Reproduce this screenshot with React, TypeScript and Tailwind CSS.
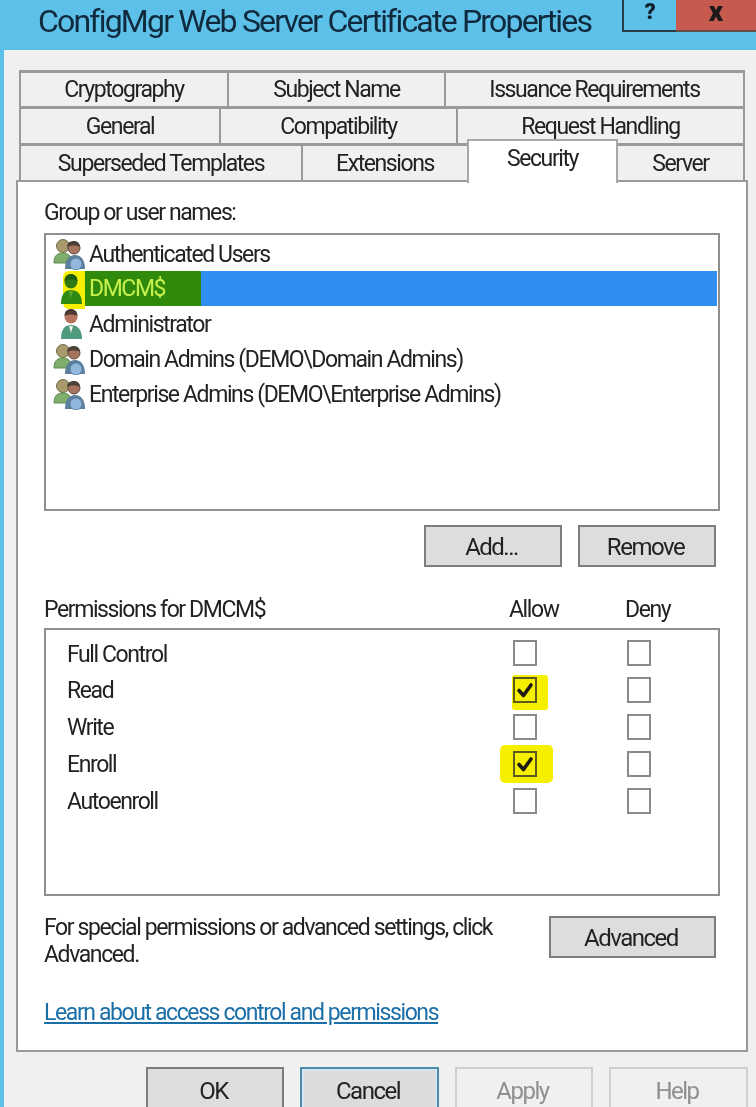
import React from "react";

const font = "font-['Roboto',sans-serif]";

function GroupIcon() {
  return (
    <svg width="33" height="32" viewBox="0 0 33 32" className="shrink-0">
      <circle cx="10" cy="8" r="6.5" fill="#a89a6c" stroke="#6f7048" strokeWidth="1" />
      <path d="M1 25c0-8 4-10 9-10s9 3 9 10z" fill="#7fae6c" stroke="#5f8a52" strokeWidth="1" />
      <circle cx="21" cy="10" r="6" fill="#a8735c" stroke="#5c4a40" strokeWidth="1" />
      <path d="M21 3c-4 0-7 2-7 6 3-2 10-2 13 0 0-4-3-6-6-6z" fill="#4c4038" />
      <path d="M12 31c0-9 4-14 10-14s10 5 10 14z" fill="#5b7f9c" />
      <circle cx="23" cy="26" r="6" fill="#8fb8dc" stroke="#5f85a5" strokeWidth="1" />
    </svg>
  );
}

function UserIcon({ green }: { green?: boolean }) {
  return (
    <svg width="24" height="32" viewBox="0 0 24 32" className="shrink-0">
      <circle cx="11" cy="9" r="6.5" fill={green ? "#2f7a12" : "#b5745e"} />
      <path d="M4.500 8c0-5 3-7 6.500-7s6.500 2 6.500 7c-4-2-9-2-13 0z" fill={green ? "#1e5c10" : "#4a3a30"} />
      <path d="M1 31c0-10 4-14 10-14s11 4 11 14z" fill={green ? "#2f8a14" : "#4d9a7c"} />
      <path d="M9 18h4l-2 7z" fill={green ? "#5ca82c" : "#e8f0e8"} />
    </svg>
  );
}

function CheckBox({ checked, dark }: { checked?: boolean; dark?: boolean }) {
  return (
    <div className={`w-[24px] h-[26px] border-[2px] flex items-center justify-center ${checked ? "border-[#5d5a20]" : "border-[#8a8a8a]"} ${dark ? "" : "bg-white"}`}>
      {checked && (
        <svg width="18" height="18" viewBox="0 0 18 18">
          <path d="M3 9.500l4.500 5L15 4" fill="none" stroke="#1f1a10" strokeWidth="3.6" strokeLinecap="round" strokeLinejoin="round" />
        </svg>
      )}
    </div>
  );
}

function Btn({ label, w, disabled, accent, cls }: { label: string; w: string; disabled?: boolean; accent?: boolean; cls?: string }) {
  return (
    <div
      className={`${w} ${cls ?? "h-[42px]"} flex items-center justify-center pt-[1px] pr-[3px] border-[2px] text-[24px] tracking-[-1.5px] ${
        disabled
          ? "border-[#cfcfcf] bg-[#f0f0f0] text-[#8f8f8f]"
          : accent
          ? "border-[#4d8ba6] bg-[#dcdcdc] text-[#222] shadow-[inset_0_0_0_2px_#d4e6f2]"
          : "border-[#7d7d7d] bg-[#dddddd] text-[#222]"
      }`}
    >
      {label}
    </div>
  );
}

const tabBase = "flex items-center justify-center pt-[2px] bg-[#f0f0f0] border-t-[3px] border-l-[2px] border-[#9a9a9a] text-[23px] tracking-[-1.4px] text-[#222]";

function App() {
  return (
    <div className={`w-[756px] h-[1107px] overflow-hidden bg-[#5cc0e8] flex flex-col blur-[0.4px] ${font}`}>
      <div className="h-[50px] flex shrink-0">
        <div className="w-[622px] pl-[38px] pt-[1px] text-[32px] leading-[40px] whitespace-nowrap tracking-[-1.8px] text-[#10293d]">
          ConfigMgr Web Server Certificate Properties
        </div>
        <div className="w-[54px] h-[32px] border-l-[2px] border-b-[2px] border-[#2c3a44] pb-[6px] flex items-center justify-center text-[22px] leading-[22px] font-black text-[#10202c]">?</div>
        <div className="w-[80px] h-[32px] bg-[#c75a4e] border-b-[2px] border-[#6a4a44] pb-[6px] flex items-center justify-center text-[28px] leading-[22px] font-black text-[#1a1a1a]">x</div>
      </div>

      <div className="flex-1 ml-[4px] bg-[#f0f0f0] flex flex-col pt-[20px] min-h-0">
        <div className="ml-[15px] w-[726px] flex flex-col border-r-[2px] border-[#9a9a9a]">
          <div className="flex h-[36px]">
            <div className={`${tabBase} w-[208px]`}>Cryptography</div>
            <div className={`${tabBase} w-[217px]`}>Subject Name</div>
            <div className={`${tabBase} flex-1`}>Issuance Requirements</div>
          </div>
          <div className="flex h-[37px]">
            <div className={`${tabBase} w-[200px]`}>General</div>
            <div className={`${tabBase} w-[237px]`}>Compatibility</div>
            <div className={`${tabBase} flex-1`}>Request Handling</div>
          </div>
          <div className="flex h-[37px]">
            <div className={`${tabBase} w-[282px]`}>Superseded Templates</div>
            <div className={`${tabBase} w-[166px]`}>Extensions</div>
            <div className="relative z-10 w-[151px] h-[44px] -mt-[4px] pb-[6px] flex items-center justify-center bg-white border-t-[2px] border-l-[2px] border-r-[2px] border-[#a8a8a8] text-[23px] tracking-[-1.4px] text-[#222]">Security</div>
            <div className={`${tabBase} flex-1 !border-l-0`}>Server</div>
          </div>
        </div>

        <div className="ml-[12px] w-[732px] h-[872px] shrink-0 bg-white border-[2px] border-[#9a9a9a] px-[26px] flex flex-col text-[#222] text-[23px] tracking-[-1.4px]">
          <div className="h-[51px] flex items-end leading-[32px] pb-[3px] -mt-[1px]">Group or user names:</div>
          <div className="h-[278px] mt-[1px] border-[2px] border-[#8f8f8f] pt-[1px] pl-[8px] pr-[1px] flex flex-col shrink-0">
            <div className="h-[35px] flex items-center"><div className="w-[36px] -ml-[1px]"><GroupIcon /></div><span className="pt-[3px]">Authenticated Users</span></div>
            <div className="h-[35px] flex items-start">
              <div className="w-[22px] h-[38px] ml-[9px] pb-[3px] flex items-center bg-[#f6f000] rounded-l-[6px]"><div className="-ml-[3px]"><UserIcon green /></div></div>
              <div className="flex-1 h-[35px] flex bg-[#2f8ff0]">
                <div className="w-[116px] bg-[#2f8a0c] text-[#c8f04c] flex items-center pl-[4px] pt-[2px]">DMCM$</div>
              </div>
            </div>
            <div className="h-[35px] flex items-center"><div className="w-[35px] pl-[6px]"><UserIcon /></div><span className="pt-[3px]">Administrator</span></div>
            <div className="h-[35px] flex items-center"><div className="w-[36px] -ml-[1px]"><GroupIcon /></div><span className="pt-[3px]">Domain Admins (DEMO\Domain Admins)</span></div>
            <div className="h-[35px] flex items-center"><div className="w-[36px] -ml-[1px]"><GroupIcon /></div><span className="pt-[3px]">Enterprise Admins (DEMO\Enterprise Admins)</span></div>
          </div>

          <div className="flex justify-end gap-[16px] mt-[14px] pr-[4px]">
            <Btn label="Add..." w="w-[138px]" />
            <Btn label="Remove" w="w-[138px]" />
          </div>

          <div className="flex h-[32px] mt-[26px] pt-[2px] items-center leading-[32px]">
            <div className="w-[465px]">Permissions for DMCM$</div>
            <div className="w-[116px]">Allow</div>
            <div>Deny</div>
          </div>

          <div className="h-[268px] mt-[3px] border-[2px] border-[#8f8f8f] pt-[5px] pl-[21px] flex flex-col shrink-0">
            {[
              ["Full Control", false],
              ["Read", true],
              ["Write", false],
              ["Enroll", true],
              ["Autoenroll", false],
            ].map(([label, c], i) => (
              <div key={i} className="h-[36.8px] flex items-center shrink-0">
                <div className="w-[446px] pt-[3px]">{label as string}</div>
                <div className="relative w-[114px]">
                  {i === 1 && <div className="absolute left-[-1px] top-[-2px] w-[36px] h-[35px] bg-[#f6f000] rounded-[3px]" />}
                  {i === 3 && <div className="absolute left-[-13px] top-[-6px] w-[53px] h-[38px] bg-[#f6f000] rounded-[5px]" />}
                  <div className="relative"><CheckBox checked={c as boolean} dark={c as boolean} /></div>
                </div>
                <CheckBox />
              </div>
            ))}
          </div>

          <div className="flex mt-[20px] justify-between pr-[4px]">
            <div className="w-[480px] leading-[27px] -mt-[2px]">For special permissions or advanced settings, click Advanced.</div>
            <Btn label="Advanced" w="w-[167px]" />
          </div>

          <div className="mt-[29px] leading-[32px] text-[#1b6fa8] underline">Learn about access control and permissions</div>
        </div>

        <div className="flex justify-end gap-[16px] mt-[15px] pr-[8px] text-[#222]">
          <Btn label="OK" w="w-[138px]" cls="h-[46px]" />
          <Btn label="Cancel" w="w-[139px]" cls="h-[46px]" accent />
          <Btn label="Apply" w="w-[138px]" cls="h-[46px]" disabled />
          <Btn label="Help" w="w-[139px]" cls="h-[46px]" disabled />
        </div>
      </div>
    </div>
  );
}

export default App;
